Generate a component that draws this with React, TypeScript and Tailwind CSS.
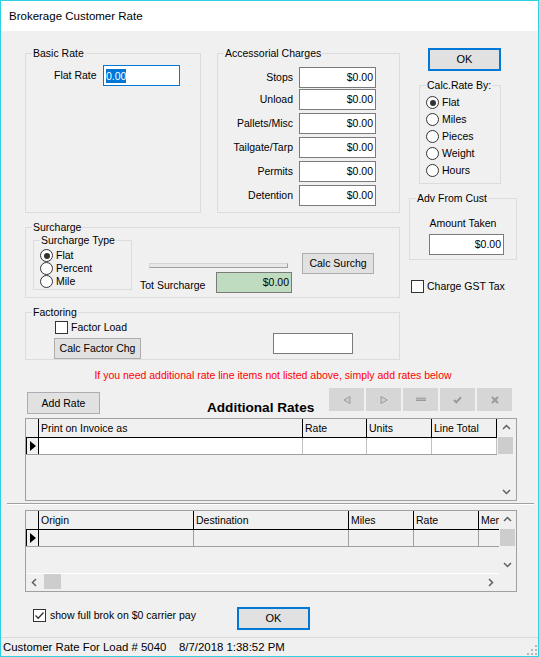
import React from 'react';

type Dir = 'up' | 'down' | 'left' | 'right';

const Chevron = ({ dir }: { dir: Dir }) => {
  const paths: Record<Dir, string> = {
    up: 'M1 5 L4.5 1.5 L8 5',
    down: 'M1 2 L4.5 5.5 L8 2',
    left: 'M5 1 L1.5 4.5 L5 8',
    right: 'M2 1 L5.5 4.5 L2 8',
  };
  const vertical = dir === 'up' || dir === 'down';
  return (
    <svg width={vertical ? 9 : 7} height={vertical ? 7 : 9} viewBox={vertical ? '0 0 9 7' : '0 0 7 9'}>
      <path d={paths[dir]} fill="none" stroke="#606060" strokeWidth="1.5" />
    </svg>
  );
};

const RowMarker = () => (
  <svg width="6" height="10" viewBox="0 0 6 10">
    <polygon points="0,0 6,5 0,10" fill="#000" />
  </svg>
);

const GroupBox = ({ label, className, children }: { label: string; className: string; children?: React.ReactNode }) => (
  <fieldset className={`border border-[#dcdcdc] ${className}`}>
    <legend className="ml-[6px] px-[1px] leading-[13px]">{label}</legend>
    {children}
  </fieldset>
);

const Radio = ({ checked, label, h }: { checked?: boolean; label: string; h: string }) => (
  <div className={`flex items-center ${h}`}>
    <span className="w-[13px] h-[13px] rounded-full border border-[#333333] bg-white flex items-center justify-center shrink-0">
      {checked && <span className="w-[6px] h-[6px] rounded-full bg-[#333333]" />}
    </span>
    <span className="ml-[3px]">{label}</span>
  </div>
);

const CheckBox = ({ checked }: { checked?: boolean }) => (
  <span className="w-[13px] h-[13px] border border-[#333333] bg-white flex items-center justify-center shrink-0">
    {checked && (
      <svg width="11" height="11" viewBox="0 0 11 11">
        <path d="M1.5 5.5 L4.2 8.2 L9.5 2.5" fill="none" stroke="#333" strokeWidth="1.3" />
      </svg>
    )}
  </span>
);

const Money = ({ className }: { className: string }) => (
  <div className={`h-[21px] border border-[#7a7a7a] bg-white flex items-center justify-end pr-[2px] ${className}`}>$0.00</div>
);

const WinButton = ({ label, className }: { label: string; className: string }) => (
  <button className={`bg-[#e1e1e1] border border-[#adadad] flex items-center justify-center ${className}`}>{label}</button>
);

const NavButton = ({ children }: { children: React.ReactNode }) => (
  <div className="w-[35px] h-[23px] bg-[#d6d6d6] flex items-center justify-center">{children}</div>
);

const SizeGrip = () => (
  <svg width="10" height="10" viewBox="0 0 10 10">
    {[[8, 0], [8, 4], [4, 4], [8, 8], [4, 8], [0, 8]].map(([x, y]) => (
      <rect key={`${x}-${y}`} x={x} y={y} width="2" height="2" fill="#b8b8b8" />
    ))}
  </svg>
);

export default function App() {
  return (
    <div className="w-[539px] h-[657px] border border-[#2fd0e2] flex flex-col bg-[#f0f0f0] font-['Liberation_Sans',Arial,sans-serif] text-[10.5px] leading-[13px] text-black overflow-hidden">
      {/* title bar */}
      <div className="h-[30px] shrink-0 bg-white flex items-center pl-[8px] text-[11.5px]">Brokerage Customer Rate</div>

      <div className="flex-1 flex flex-col">
        {/* upper form */}
        <div className="flex pt-[16px] pl-[24px]">
          <div className="w-[375px] flex flex-col">
            <div className="flex gap-[16px]">
              <GroupBox label="Basic Rate" className="w-[176px] h-[166px]">
                <div className="flex items-center mt-[5px] pl-[28px]">
                  <span className="w-[49px]">Flat Rate</span>
                  <div className="w-[77px] h-[21px] border border-[#0078d7] bg-white flex items-center pl-[2px]">
                    <span className="bg-[#0078d7] text-white leading-[14px]">0.00</span>
                  </div>
                </div>
              </GroupBox>

              <GroupBox label="Accessorial Charges" className="w-[183px] h-[166px]">
                <div className="flex flex-col">
                  {[
                    ['Stops', 'mt-[7px]'],
                    ['Unload', 'mt-[1px]'],
                    ['Pallets/Misc', 'mt-[3px]'],
                    ['Tailgate/Tarp', 'mt-[3px]'],
                    ['Permits', 'mt-[3px]'],
                    ['Detention', 'mt-[3px]'],
                  ].map(([label, mt]) => (
                    <div key={label} className={`flex items-center ${mt}`}>
                      <span className="w-[75px] text-right">{label}</span>
                      <Money className="w-[77px] ml-[6px]" />
                    </div>
                  ))}
                </div>
              </GroupBox>
            </div>

            <GroupBox label="Surcharge" className="w-[375px] h-[77px] mt-[8px]">
              <div className="flex items-start">
                <GroupBox label="Surcharge Type" className="w-[99px] h-[56px] ml-[7px]">
                  <div className="mt-[2px] pl-[6px]">
                    <Radio checked label="Flat" h="h-[13px]" />
                    <Radio label="Percent" h="h-[13px]" />
                    <Radio label="Mile" h="h-[13px]" />
                  </div>
                </GroupBox>
                <div className="ml-[8px] flex flex-col">
                  <div className="ml-[9px] mt-[29px] w-[139px] h-[5px] border border-t-[#d4d4d4] border-l-[#d4d4d4] border-b-[#a0a0a0] border-r-[#a0a0a0] bg-[#e8e8e8]" />
                  <div className="flex items-start mt-[4px]">
                    <span className="w-[76px] pt-[7px]">Tot Surcharge</span>
                    <div className="w-[76px] h-[21px] border border-[#7a7a7a] bg-[#c0dcc0] flex items-center justify-end pr-[2px]">$0.00</div>
                  </div>
                </div>
                <WinButton label="Calc Surchg" className="ml-[10px] mt-[19px] w-[72px] h-[21px]" />
              </div>
            </GroupBox>

            <GroupBox label="Factoring" className="w-[375px] h-[54px] mt-[8px]">
              <div className="flex items-start">
                <div className="ml-[28px] flex flex-col">
                  <div className="flex items-center h-[13px] mt-[2px] ml-[1px]">
                    <CheckBox />
                    <span className="ml-[3px]">Factor Load</span>
                  </div>
                  <WinButton label="Calc Factor Chg" className="mt-[4px] w-[87px] h-[21px]" />
                </div>
                <div className="ml-[132px] mt-[14px] w-[80px] h-[21px] border border-[#7a7a7a] bg-white" />
              </div>
            </GroupBox>
          </div>

          {/* right column */}
          <div className="ml-[9px] w-[108px] flex flex-col">
            <button className="ml-[19px] mt-[1px] w-[73px] h-[23px] border-2 border-[#0078d7] bg-[#e1e1e1] flex items-center justify-center text-[11px]">OK</button>
            <GroupBox label="Calc.Rate By:" className="ml-[10px] mt-[8px] w-[82px] h-[105px]">
              <div className="mt-[2px] pl-[6px]">
                <Radio checked label="Flat" h="h-[17px]" />
                <Radio label="Miles" h="h-[17px]" />
                <Radio label="Pieces" h="h-[17px]" />
                <Radio label="Weight" h="h-[17px]" />
                <Radio label="Hours" h="h-[17px]" />
              </div>
            </GroupBox>
            <GroupBox label="Adv From Cust" className="mt-[8px] w-[108px] h-[68px]">
              <div className="mt-[12px] text-center">Amount Taken</div>
              <Money className="mt-[4px] ml-[19px] w-[75px]" />
            </GroupBox>
            <div className="flex items-center mt-[20px] ml-[2px]">
              <CheckBox />
              <span className="ml-[3px]">Charge GST Tax</span>
            </div>
          </div>
        </div>

        <div className="mt-[9px] pl-[7px] text-center text-[#ff0000]">
          If you need additional rate line items not listed above, simply add rates below
        </div>

        {/* add rate row */}
        <div className="mt-[6px] h-[30px] flex items-start">
          <WinButton label="Add Rate" className="ml-[26px] mt-[4px] w-[73px] h-[22px]" />
          <span className="ml-[107px] mt-[12px] font-bold text-[13.6px] leading-[15px]">Additional Rates</span>
          <div className="ml-auto mr-[26px] flex gap-[2px]">
            <NavButton>
              <svg width="8" height="8" viewBox="0 0 8 8"><polygon points="7,0.5 0.8,4 7,7.5" fill="#cfcfcf" stroke="#9a9a9a" strokeWidth="1" /></svg>
            </NavButton>
            <NavButton>
              <svg width="8" height="8" viewBox="0 0 8 8"><polygon points="1,0.5 7.2,4 1,7.5" fill="#cfcfcf" stroke="#9a9a9a" strokeWidth="1" /></svg>
            </NavButton>
            <NavButton>
              <svg width="10" height="5" viewBox="0 0 10 5"><rect x="0" y="0.5" width="10" height="1.5" fill="#a8a8a8" /><rect x="0" y="2.5" width="10" height="1.5" fill="#9a9a9a" /></svg>
            </NavButton>
            <NavButton>
              <svg width="9" height="8" viewBox="0 0 9 8"><path d="M1 4 L3.3 6.3 L8 1.2" fill="none" stroke="#9a9a9a" strokeWidth="2" /></svg>
            </NavButton>
            <NavButton>
              <svg width="8" height="8" viewBox="0 0 8 8"><path d="M1 1 L7 7 M7 1 L1 7" fill="none" stroke="#9a9a9a" strokeWidth="2" /></svg>
            </NavButton>
          </div>
        </div>

        {/* additional rates grid */}
        <div className="ml-[24px] w-[492px] h-[83px] border border-[#a0a0a0] flex">
          <div className="w-[471px] flex flex-col">
            <div className="flex h-[19px] border-b border-black">
              <div className="w-[13px] shrink-0 border-r border-black" />
              <div className="w-[264px] shrink-0 border-r border-black pl-[2px] pt-[3px]">Print on Invoice as</div>
              <div className="w-[64px] shrink-0 border-r border-black pl-[2px] pt-[3px]">Rate</div>
              <div className="w-[65px] shrink-0 border-r border-black pl-[2px] pt-[3px]">Units</div>
              <div className="w-[65px] shrink-0 border-r border-black pl-[2px] pt-[3px]">Line Total</div>
            </div>
            <div className="flex h-[17px] border-b border-[#a0a0a0]">
              <div className="w-[13px] shrink-0 border-l border-r border-black flex items-center justify-center"><RowMarker /></div>
              <div className="w-[264px] shrink-0 border-r border-[#c0c0c0] bg-white" />
              <div className="w-[64px] shrink-0 border-r border-[#c0c0c0] bg-white" />
              <div className="w-[65px] shrink-0 border-r border-[#c0c0c0] bg-white" />
              <div className="w-[65px] shrink-0 border-r border-[#c0c0c0] bg-white" />
            </div>
          </div>
          <div className="w-[19px] flex flex-col">
            <div className="h-[17px] flex items-center justify-center"><Chevron dir="up" /></div>
            <div className="ml-[1px] mt-[1px] w-[15px] h-[17px] bg-[#cdcdcd]" />
            <div className="mt-auto h-[17px] flex items-center justify-center"><Chevron dir="down" /></div>
          </div>
        </div>

        <div className="ml-[6px] mt-[2px] w-[527px] h-[2px] border-t border-[#a0a0a0] border-b border-b-white" />

        {/* lanes grid */}
        <div className="ml-[24px] mt-[5px] w-[492px] h-[82px] border border-[#a0a0a0] flex flex-col">
          <div className="h-[62px] flex">
            <div className="w-[473px] flex flex-col overflow-hidden">
              <div className="flex h-[19px] border-b border-black">
                <div className="w-[13px] shrink-0 border-r border-black" />
                <div className="w-[155px] shrink-0 border-r border-black pl-[2px] pt-[3px]">Origin</div>
                <div className="w-[155px] shrink-0 border-r border-black pl-[2px] pt-[3px]">Destination</div>
                <div className="w-[65px] shrink-0 border-r border-black pl-[2px] pt-[3px]">Miles</div>
                <div className="w-[65px] shrink-0 border-r border-black pl-[2px] pt-[3px]">Rate</div>
                <div className="w-[20px] shrink-0 pl-[2px] pt-[3px] whitespace-nowrap overflow-hidden">Memo</div>
              </div>
              <div className="flex h-[17px] border-b border-[#a0a0a0]">
                <div className="w-[13px] shrink-0 border-l border-r border-black flex items-center justify-center"><RowMarker /></div>
                <div className="w-[155px] shrink-0 border-r border-[#a0a0a0]" />
                <div className="w-[155px] shrink-0 border-r border-[#a0a0a0]" />
                <div className="w-[65px] shrink-0 border-r border-[#a0a0a0]" />
                <div className="w-[65px] shrink-0 border-r border-[#a0a0a0]" />
                <div className="w-[20px] shrink-0" />
              </div>
            </div>
            <div className="w-[17px] flex flex-col">
              <div className="h-[17px] flex items-center justify-center"><Chevron dir="up" /></div>
              <div className="ml-[1px] mt-[1px] w-[15px] h-[17px] bg-[#cdcdcd]" />
              <div className="mt-auto h-[17px] flex items-center justify-center"><Chevron dir="down" /></div>
            </div>
          </div>
          <div className="flex h-[18px]">
            <div className="w-[473px] border-t border-white flex">
              <div className="w-[17px] flex items-center justify-center"><Chevron dir="left" /></div>
              <div className="ml-[1px] w-[17px] h-[15px] bg-[#cdcdcd]" />
              <div className="ml-auto w-[17px] flex items-center justify-center"><Chevron dir="right" /></div>
            </div>
          </div>
        </div>

        {/* bottom row */}
        <div className="mt-[15px] flex items-start">
          <div className="ml-[32px] mt-[2px] w-[204px] flex items-center">
            <CheckBox checked />
            <span className="ml-[4px]">show full brok on $0 carrier pay</span>
          </div>
          <button className="w-[73px] h-[23px] border-2 border-[#0078d7] bg-[#e1e1e1] flex items-center justify-center text-[11px]">OK</button>
        </div>

        {/* status bar */}
        <div className="mt-auto h-[19px] border-t border-[#dadada] flex items-start text-[11.4px] leading-[15px]">
          <span className="pl-[2px] pt-[2px] w-[178px]">Customer Rate For Load # 5040</span>
          <span className="pt-[2px]">8/7/2018 1:38:52 PM</span>
          <div className="ml-auto mr-[1px] mt-[7px]"><SizeGrip /></div>
        </div>
      </div>
    </div>
  );
}
